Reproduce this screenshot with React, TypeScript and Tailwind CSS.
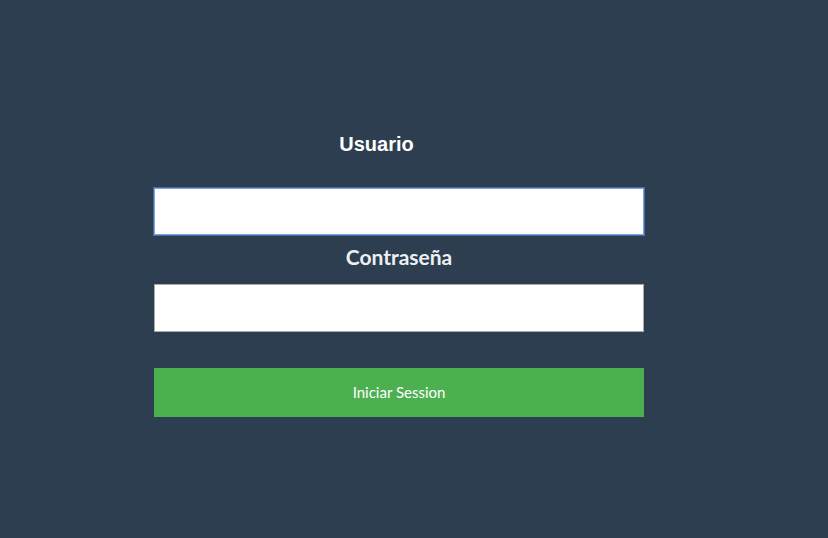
export default function App() {
  return (
    <div className="w-[828px] h-[538px] bg-[#2c3e50] pt-[132px] pl-[154px]">
      <form className="w-[490px] flex flex-col" onSubmit={(e) => e.preventDefault()}>
        <label className="block pr-[45px] text-center text-[20px] leading-[24px] font-bold text-white font-['Liberation_Sans',Arial,sans-serif]">
          Usuario
        </label>
        <input
          type="text"
          className="mt-[32px] h-[47px] w-full bg-white border border-[#7ba0e6] outline outline-1 outline-[#4d6c9e] px-3"
        />
        <label className="block mt-[10px] text-center text-[21px] leading-[24px] font-bold text-[#ecf0f1] font-['Lato',sans-serif]">
          Contraseña
        </label>
        <input
          type="password"
          className="mt-[15px] h-[48px] w-full bg-white border border-[#a9a9a9] px-3"
        />
        <button
          type="submit"
          className="mt-[36px] h-[49px] w-full bg-[#4caf50] text-white text-[15px] font-['Lato',sans-serif]"
        >
          Iniciar Session
        </button>
      </form>
    </div>
  );
}
